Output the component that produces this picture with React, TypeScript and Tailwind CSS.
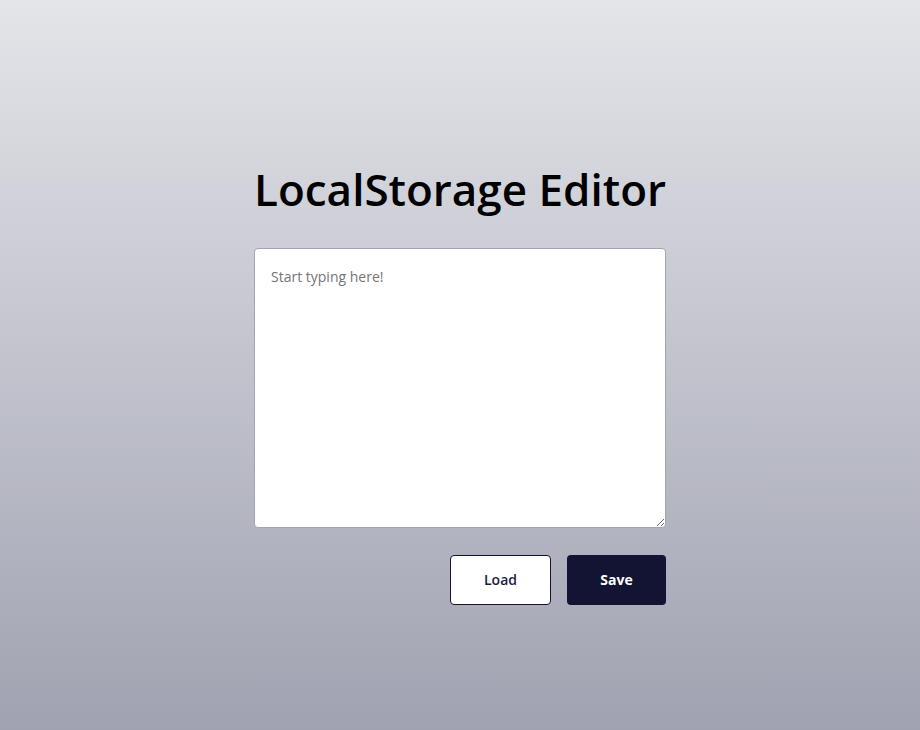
export default function App() {
  return (
    <div
      className="min-h-screen w-full flex flex-col items-center bg-gradient-to-b from-[#e4e5e9] to-[#a0a2b1] text-black"
      style={{ fontFamily: '"Open Sans", sans-serif' }}
    >
      <div className="w-[412px] flex flex-col pt-[159px]">
        <h1 className="text-[44px] leading-[60px] font-semibold text-center text-black whitespace-nowrap">
          LocalStorage Editor
        </h1>
        <textarea
          placeholder="Start typing here!"
          className="mt-[29px] w-[412px] h-[280px] bg-white border border-[#a3a4b1] rounded-[4px] px-4 pt-[18px] pb-4 text-[14px] leading-[20px] text-black placeholder:text-[#757575] outline-none"
        />
        <div className="mt-[27px] flex justify-end gap-4">
          <button className="w-[101px] h-[50px] pb-[2px] bg-white border border-[#14142f] rounded-[4px] text-[14px] font-semibold text-[#1c1c3a]">
            Load
          </button>
          <button className="w-[99px] h-[50px] pb-[2px] bg-[#131333] rounded-[4px] text-[14px] font-bold text-white">
            Save
          </button>
        </div>
      </div>
    </div>
  );
}
